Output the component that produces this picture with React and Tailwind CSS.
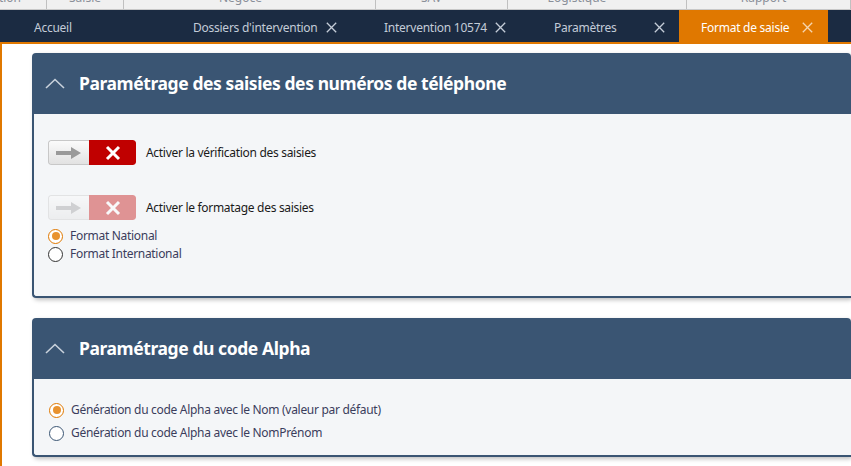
import React from "react";

const font = { fontFamily: '"Segoe UI", "Noto Sans", "Open Sans", sans-serif' };

function CloseX({ color = "#c5cdd8" }) {
  return (
    <svg width="11" height="11" viewBox="0 0 11 11" className="shrink-0">
      <path d="M0.8 0.8 L10.2 10.2 M10.2 0.8 L0.8 10.2" stroke={color} strokeWidth="1.3" fill="none" />
    </svg>
  );
}

function Tab({ w, label, close, active, pl = "pl-[23px]", pr = "pr-[21px]" }) {
  return (
    <div
      className={`h-full flex items-center pt-[3px] ${pl} ${pr} shrink-0 ${active ? "bg-[#e07800] text-white" : "text-[#c3ccd8]"}`}
      style={{ width: w }}
    >
      <span className="text-[12px] tracking-[-0.25px] whitespace-nowrap">{label}</span>
      <div className="flex-1" />
      {close && <CloseX color={active ? "#f5d6b0" : "#c5cdd8"} />}
    </div>
  );
}

function Chevron() {
  return (
    <svg width="20" height="11" viewBox="0 0 20 11" className="shrink-0">
      <path d="M1 10 L10 1.5 L19 10" stroke="#c9d2dc" strokeWidth="1.6" fill="none" />
    </svg>
  );
}

function Toggle({ disabled }) {
  return (
    <div className={`flex h-[25px] w-[88px] rounded-[3px] overflow-hidden shrink-0 ${disabled ? "opacity-40" : ""}`}>
      <div className="w-[41px] h-full flex items-center justify-center bg-gradient-to-b from-[#fbfbfb] to-[#e2e2e2] border border-[#c8c8c8] border-r-0 rounded-l-[3px]">
        <svg width="26" height="14" viewBox="0 0 26 14">
          <path d="M0 5 H15 V1 L25 7 L15 13 V9 H0 Z" fill="#9a9a9a" />
        </svg>
      </div>
      <div className="flex-1 h-full bg-[#c00000] flex items-center justify-center rounded-r-[3px]">
        <svg width="16" height="16" viewBox="0 0 16 16">
          <path d="M2 2 L14 14 M14 2 L2 14" stroke="#fff" strokeWidth="3" fill="none" />
        </svg>
      </div>
    </div>
  );
}

function Radio({ checked, label, ring = "#333" }) {
  return (
    <div className="flex items-center h-[18px]">
      <div
        className="w-[15px] h-[15px] rounded-full flex items-center justify-center bg-white shrink-0"
        style={{ border: `1.5px solid ${checked ? "#e07800" : ring}` }}
      >
        {checked && <div className="w-[8px] h-[8px] rounded-full bg-[#e8922f]" />}
      </div>
      <span className="ml-[7px] text-[12px] tracking-[-0.3px] text-[#3b3d5c] whitespace-nowrap">{label}</span>
    </div>
  );
}

function Panel({ title, children, bodyClass }) {
  return (
    <div className="ml-[30px] shadow-[2px_2px_4px_rgba(0,0,0,0.25)] rounded-[4px]">
      <div className="h-[61px] bg-[#3a5573] rounded-t-[4px] flex items-center pl-[13px]">
        <Chevron />
        <span className="ml-[14px] text-white font-bold text-[17.5px] tracking-[-0.42px] whitespace-nowrap">{title}</span>
      </div>
      <div className={`bg-[#f4f6f8] border-l-2 border-b-2 border-[#3a5573] rounded-bl-[4px] ${bodyClass}`}>
        {children}
      </div>
    </div>
  );
}

export default function App() {
  const strip = [
    { w: 47, label: "Administration", align: "justify-end pr-[25px]" },
    { w: 77, label: "Saisie", align: "justify-center" },
    { w: 252, label: "Négoce", align: "justify-center pr-[18px]" },
    { w: 132, label: "SAV", align: "justify-center pr-[20px]" },
    { w: 179, label: "Logistique", align: "justify-center pr-[40px]" },
    { w: 164, label: "Rapport", align: "justify-center pr-[10px]" },
  ];
  return (
    <div className="w-[851px] h-[466px] overflow-hidden bg-white" style={font}>
      {/* top menu strip */}
      <div className="h-[10px] bg-[#f0f0f0] border-b border-[#c8c8c8] flex overflow-hidden">
        {strip.map((s, i) => (
          <div
            key={i}
            className={`h-full flex ${s.align} border-r border-[#c0c0c0] overflow-hidden shrink-0`}
            style={{ width: s.w }}
          >
            <span className="text-[12px] leading-[14px] text-[#8a8f99] mt-[-9px] whitespace-nowrap">{s.label}</span>
          </div>
        ))}
      </div>
      {/* tab bar */}
      <div className="h-[32px] bg-[#1b2b42] flex">
        <Tab w={170} label="Accueil" pl="pl-[34px]" />
        <Tab w={190} label="Dossiers d'intervention" close pr="pr-[23px]" />
        <Tab w={171} label="Intervention 10574" close pl="pl-[24px]" pr="pr-[25px]" />
        <Tab w={148} label="Paramètres" close pr="pr-[14px]" />
        <Tab w={149} label="Format de saisie" close active pl="pl-[22px]" pr="pr-[15px]" />
      </div>
      <div className="h-[2px] bg-[#e07800]" />
      {/* content */}
      <div className="border-l-2 border-[#e07800] h-[422px] pt-[9px]">
        <Panel title="Paramétrage des saisies des numéros de téléphone" bodyClass="h-[184px] pt-[26px] pl-[14px]">
          <div className="flex items-center">
            <Toggle />
            <span className="ml-[10px] text-[12px] tracking-[-0.3px] text-[#1a1a1a] pt-[1px]">Activer la vérification des saisies</span>
          </div>
          <div className="flex items-center mt-[30px]">
            <Toggle disabled />
            <span className="ml-[10px] text-[12px] tracking-[-0.3px] text-[#1a1a1a] pt-[1px]">Activer le formatage des saisies</span>
          </div>
          <div className="mt-[7px]">
            <Radio checked label="Format National" />
            <Radio label="Format International" />
          </div>
        </Panel>
        <div className="h-[20px]" />
        <Panel title="Paramétrage du code Alpha" bodyClass="h-[78px] pt-[22px] pl-[15px]">
          <div className="flex flex-col gap-[5px]">
            <Radio checked label="Génération du code Alpha avec le Nom (valeur par défaut)" />
            <Radio label="Génération du code Alpha avec le NomPrénom" ring="#3a5573" />
          </div>
        </Panel>
      </div>
    </div>
  );
}
